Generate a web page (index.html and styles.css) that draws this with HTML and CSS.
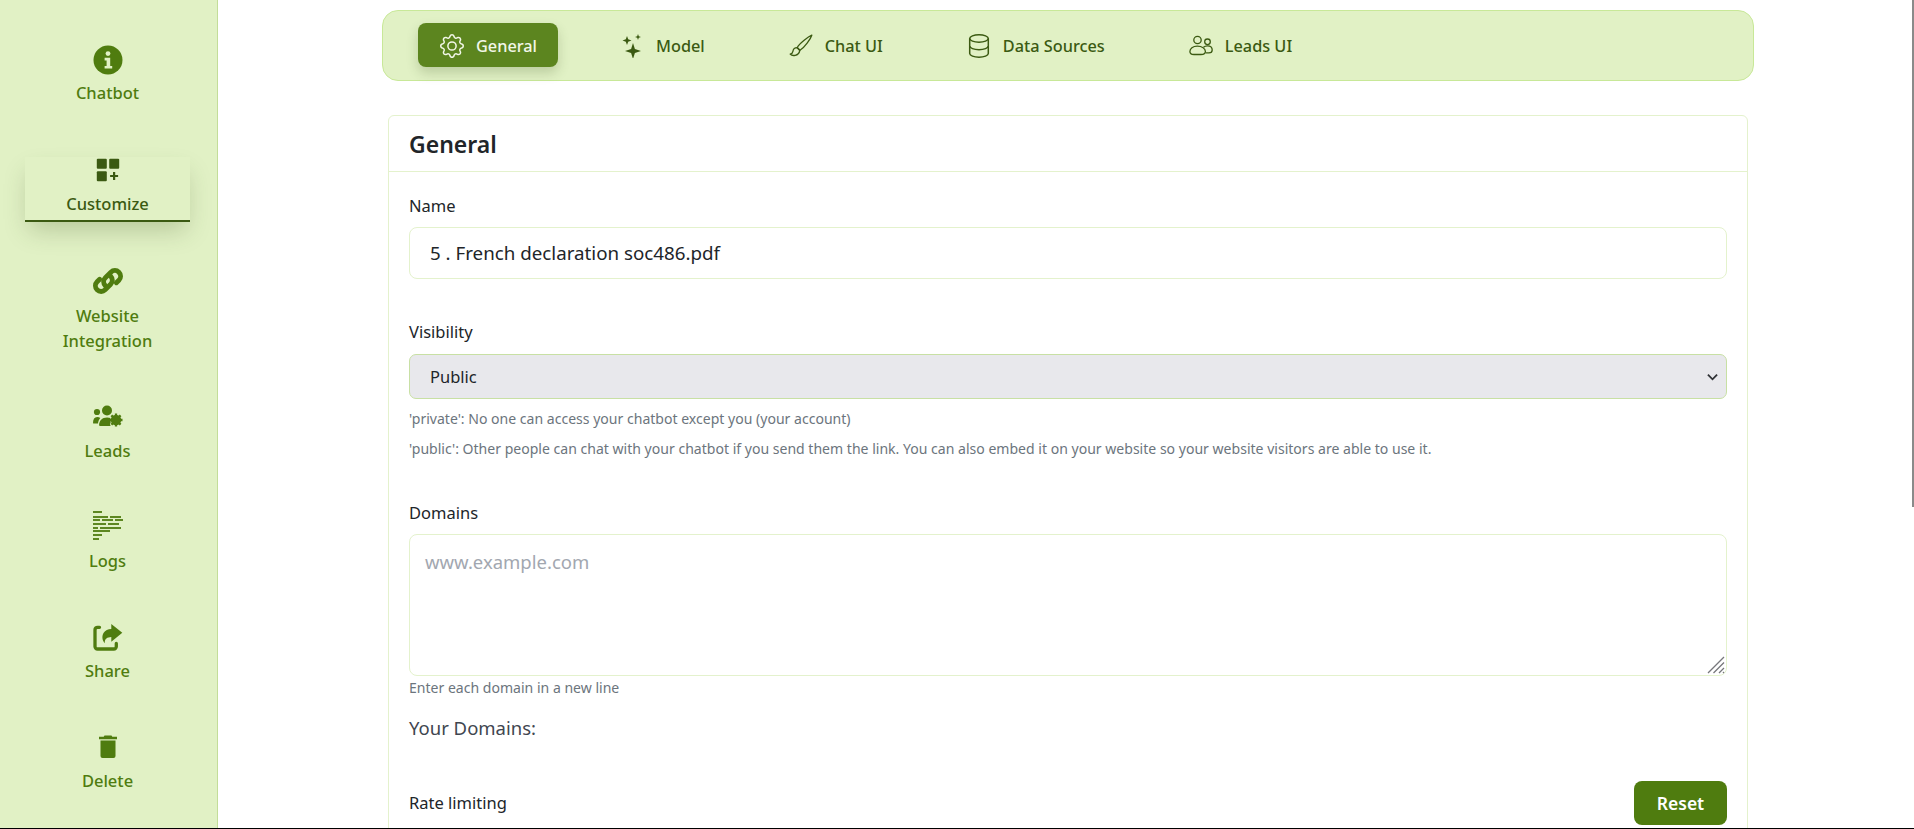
FILE: index.html
```html
<!DOCTYPE html>
<html lang="en">
<head>
  <meta charset="UTF-8" />
  <meta name="viewport" content="width=device-width, initial-scale=1.0" />
  <title>Customize chatbot</title>
  <link rel="stylesheet" href="styles.css">
</head>
<body>
  <div class="app">
    <nav class="sidebar">
      <a class="side-item">
        <svg class="side-icon" viewBox="0 0 30 30"><circle cx="15" cy="15" r="14.500" fill="currentColor"/><circle cx="15" cy="8.600" r="2.400" fill="#e1f1c5"/><path d="M11.600 12.800h5.600v8.200h2v2.600h-7.600V21h2v-5.600h-2z" fill="#e1f1c5"/></svg>
        <span>Chatbot</span>
      </a>
      <a class="side-item active">
        <svg class="side-icon" viewBox="0 0 24 24"><rect x="0.800" y="0.800" width="10" height="10" rx="1" fill="currentColor"/><rect x="13.200" y="0.800" width="10" height="10" rx="1" fill="currentColor"/><rect x="0.800" y="13.200" width="10" height="10" rx="1" fill="currentColor"/><path d="M17 14h2.200v2.900h2.900v2.200h-2.900V22H17v-2.900h-2.900v-2.200H17z" fill="currentColor"/></svg>
        <span>Customize</span>
      </a>
      <a class="side-item tall">
        <svg class="side-icon" viewBox="1.500 1.500 27 27"><g fill="none" stroke="currentColor" stroke-width="4.400" stroke-linecap="round"><path d="M12.600 19.200c-2-2-2-5.100 0-7.100l5-5c2-2 5.200-2 7.200 0 2 2 2 5.200 0 7.200l-2.300 2.300"/><path d="M17.400 10.800c2 2 2 5.100 0 7.100l-5 5c-2 2-5.200 2-7.200 0-2-2-2-5.200 0-7.200l2.300-2.300"/></g></svg>
        <span>Website<br>Integration</span>
      </a>
      <a class="side-item">
        <svg class="side-icon" viewBox="0 0 30 30"><g fill="currentColor"><circle cx="14" cy="7.500" r="5"/><circle cx="4" cy="9" r="3.100"/><path d="M0 20c0-4 1.500-6 4.200-6 1.300 0 2.300.4 3.100 1.100C6 16.600 5.200 18.400 5 20.500H1C.4 20.500 0 20.400 0 20z"/><path d="M7 23c-.5 0-.9-.4-.9-.9 0-4.400 2.800-7.700 8-7.700 1.300 0 2.400.2 3.400.6-.9 1.600-.5 3.200.5 4.100-1 1-1.200 2.600-.3 3.900z"/></g><circle cx="23" cy="17" r="3.700" fill="none" stroke="currentColor" stroke-width="3"/><path d="M23 10.500v13M16.500 17h13M18.400 12.400l9.200 9.200M27.600 12.400l-9.200 9.200" stroke="currentColor" stroke-width="2.300"/></svg>
        <span>Leads</span>
      </a>
      <a class="side-item">
        <svg class="side-icon" viewBox="0 0 30 30"><g fill="currentColor"><rect x="0" y="-1.900" width="9" height="1.800"/><rect x="0" y="3.100" width="15" height="1.800"/><rect x="17" y="3.100" width="11" height="1.800"/><rect x="0" y="6.100" width="7" height="1.800"/><rect x="9" y="6.100" width="11" height="1.800"/><rect x="22" y="6.100" width="8" height="1.800"/><rect x="0" y="10.100" width="13" height="1.800"/><rect x="15" y="10.100" width="11" height="1.800"/><rect x="0" y="14.100" width="5" height="1.800"/><rect x="7" y="14.100" width="21" height="1.800"/><rect x="0" y="17.100" width="17" height="1.800"/><rect x="0" y="21.100" width="9" height="1.800"/><rect x="0" y="25.100" width="6" height="1.800"/></g></svg>
        <span>Logs</span>
      </a>
      <a class="side-item">
        <svg class="side-icon" viewBox="0 0 30 30"><path d="M6.500 4.300H4.500A2.500 2.500 0 0 0 2 6.800v16.700A2.500 2.500 0 0 0 4.500 26h16.300a2.500 2.500 0 0 0 2.500-2.500v-3" fill="none" stroke="currentColor" stroke-width="3.300" stroke-linecap="round"/><path d="M18.300 1 29.300 9.700 18.300 18.700V14c-4 .2-6.800 1.600-6.500 6.300C9 17 8.800 13 10.500 10 12.300 7.300 15 6.200 18.300 6z" fill="currentColor"/></svg>
        <span>Share</span>
      </a>
      <a class="side-item">
        <svg class="side-icon" viewBox="0 0 30 30"><path d="M11.500 2.500h7l.8 1.200H24v2.600H6V3.700h4.700z" fill="currentColor"/><path d="M7.500 7.500h15v15.500a2 2 0 0 1-2 2h-11a2 2 0 0 1-2-2z" fill="currentColor"/></svg>
        <span>Delete</span>
      </a>
    </nav>

    <main class="content">
      <div class="tabs">
        <a class="tab active">
          <svg class="tab-icon" viewBox="0 0 16 16" fill="currentColor"><path d="M8 4.754a3.246 3.246 0 1 0 0 6.492 3.246 3.246 0 0 0 0-6.492zM5.754 8a2.246 2.246 0 1 1 4.492 0 2.246 2.246 0 0 1-4.492 0z"/><path d="M9.796 1.343c-.527-1.790-3.065-1.790-3.592 0l-.094.319a.873.873 0 0 1-1.255.520l-.292-.160c-1.640-.892-3.433.902-2.540 2.541l.159.292a.873.873 0 0 1-.520 1.255l-.319.094c-1.790.527-1.790 3.065 0 3.592l.319.094a.873.873 0 0 1 .520 1.255l-.160.292c-.892 1.640.901 3.434 2.541 2.540l.292-.159a.873.873 0 0 1 1.255.520l.094.319c.527 1.790 3.065 1.790 3.592 0l.094-.319a.873.873 0 0 1 1.255-.520l.292.160c1.640.893 3.434-.902 2.540-2.541l-.159-.292a.873.873 0 0 1 .520-1.255l.319-.094c1.790-.527 1.790-3.065 0-3.592l-.319-.094a.873.873 0 0 1-.520-1.255l.160-.292c.893-1.640-.902-3.433-2.541-2.540l-.292.159a.873.873 0 0 1-1.255-.520l-.094-.319zm-2.633.283c.246-.835 1.428-.835 1.674 0l.094.319a1.873 1.873 0 0 0 2.693 1.115l.291-.160c.764-.415 1.600.420 1.184 1.185l-.159.292a1.873 1.873 0 0 0 1.116 2.692l.318.094c.835.246.835 1.428 0 1.674l-.319.094a1.873 1.873 0 0 0-1.115 2.693l.160.291c.415.764-.420 1.600-1.185 1.184l-.291-.159a1.873 1.873 0 0 0-2.693 1.116l-.094.318c-.246.835-1.428.835-1.674 0l-.094-.319a1.873 1.873 0 0 0-2.692-1.115l-.292.160c-.764.415-1.600-.420-1.184-1.185l.159-.291A1.873 1.873 0 0 0 1.945 8.930l-.319-.094c-.835-.246-.835-1.428 0-1.674l.319-.094A1.873 1.873 0 0 0 3.060 4.377l-.160-.292c-.415-.764.420-1.600 1.185-1.184l.292.159a1.873 1.873 0 0 0 2.692-1.115l.094-.319z"/></svg>
          General
        </a>
        <a class="tab">
          <svg class="tab-icon" viewBox="0 0 24 24" fill="currentColor"><path d="M13 9l1.900 6.100L21 17l-6.100 1.900L13 25l-1.900-6.100L5 17l6.100-1.900z"/><path d="M7 2l1.200 3.300L11.500 6.500 8.200 7.700 7 11 5.800 7.700 2.500 6.500 5.800 5.300z"/><path d="M18 0l.8 2.200L21 3l-2.200.8L18 6l-.8-2.200L15 3l2.200-.8z"/></svg>
          Model
        </a>
        <a class="tab">
          <svg class="tab-icon" viewBox="0 0 24 24" fill="none" stroke="currentColor" stroke-width="1.300" stroke-linejoin="round"><path d="M22.800 1.200c-3.500 1.400-12 7.900-14.600 12.300l2.800 2.800C15.500 13.500 21.600 5 22.800 1.200z"/><path d="M8.200 13.700c-2.600 0-4 1.600-4.300 3.700-.2 1.400-1 2.300-2.700 2.700 1.800 2 8.400 2.400 9.600-3.600z"/></svg>
          Chat UI
        </a>
        <a class="tab">
          <svg class="tab-icon" viewBox="-1 0 24 24" fill="none" stroke="currentColor" stroke-width="1.500"><ellipse cx="11" cy="4.500" rx="9.300" ry="3.700"/><path d="M1.700 4.500v15c0 2 4.200 3.700 9.300 3.700s9.300-1.700 9.300-3.700v-15"/><path d="M1.700 12c0 2 4.200 3.700 9.300 3.700s9.300-1.700 9.300-3.700"/></svg>
          Data Sources
        </a>
        <a class="tab">
          <svg class="tab-icon" viewBox="0 0 24 24" fill="none" stroke="currentColor" stroke-width="1.300"><circle cx="8.500" cy="6" r="3.700"/><circle cx="18.500" cy="7.800" r="2.800"/><path d="M8.300 12.200c-4.500 0-7.400 2.500-7.400 5.300 0 2 1.700 3 4 3h7c2.800 0 4.500-1 4.500-3 0-2.900-3.300-5.300-8.100-5.300z"/><path d="M14.500 13.300c1-1 2.500-1.500 4-1.500 2.900 0 4.700 1.900 4.700 4.100 0 1.800-1.200 2.900-3.200 2.900h-3.400"/></svg>
          Leads UI
        </a>
      </div>

      <section class="card">
        <h2 class="card-title">General</h2>
        <div class="card-body">
          <label class="field-label name-label">Name</label>
          <input class="text-input" type="text" value="5 . French declaration soc486.pdf">

          <label class="field-label visibility-label">Visibility</label>
          <select class="select-input">
            <option>Public</option>
            <option>Private</option>
          </select>
          <p class="help first">'private': No one can access your chatbot except you (your account)</p>
          <p class="help second">'public': Other people can chat with your chatbot if you send them the link. You can also embed it on your website so your website visitors are able to use it.</p>

          <label class="field-label domains-label">Domains</label>
          <div class="area-wrap">
            <textarea class="area-input" placeholder="www.example.com"></textarea>
            <svg class="grip" viewBox="0 0 18 18" stroke="#77787c" stroke-width="1.300"><path d="M1 17 17 1M6.500 17 17 6.500M12 17l5-5M16 17l1-1"/></svg>
          </div>
          <p class="help hint">Enter each domain in a new line</p>
          <h3 class="domains-title">Your Domains:</h3>

          <div class="rate-row">
            <span class="field-label">Rate limiting</span>
            <button class="reset-btn">Reset</button>
          </div>
        </div>
      </section>
    </main>

    <div class="scroll-thumb"></div>
  </div>
</body>
</html>
```

FILE: styles.css
```css
* {
  margin: 0;
  padding: 0;
  box-sizing: border-box;
}

body {
  font-family: 'Noto Sans', 'Open Sans', sans-serif;
  background: #fff;
  color: #212529;
  overflow: hidden;
}

.app {
  position: relative;
  display: flex;
  height: 829px;
  overflow: hidden;
  border-bottom: 1px solid #000;
}

/* left rail */
.sidebar {
  flex: 0 0 218px;
  background: #e1f1c5;
  border-right: 1px solid #c3dd99;
  display: flex;
  flex-direction: column;
  align-items: center;
  padding: 45px 2px 0 0;
}

.side-item {
  flex: none;
  width: 165px;
  display: flex;
  flex-direction: column;
  align-items: center;
  color: #4f7c0f;
  font-size: 16.500px;
  font-weight: 500;
  line-height: 26px;
  text-align: center;
  height: 110px;
}

.side-item span {
  margin-top: 5px;
}

.side-item.tall {
  height: 137px;
  line-height: 25px;
}

.side-item.tall span {
  margin-top: 7px;
}

.side-item.active {
  color: #3b5a12;
  height: 65px;
  margin: 2px 0 44px;
  padding-top: 1px;
  border-bottom: 2px solid #3b5a12;
  box-shadow: 0 12px 24px -4px rgba(60, 80, 30, 0.25);
}

.side-item.active span {
  margin-top: 9px;
}

.side-icon {
  width: 30px;
  height: 30px;
  flex: none;
  overflow: visible;
}

.side-item.active .side-icon {
  width: 24px;
  height: 24px;
}

/* main column */
.content {
  flex: 1;
  padding: 10px 0 0 164px;
}

.tabs {
  width: 1372px;
  height: 71px;
  background: #e1f1c5;
  border: 1px solid #c8e898;
  border-radius: 16px;
  display: flex;
  align-items: flex-start;
  gap: 40px;
  padding: 12px 0 0 35px;
}

.tab {
  display: flex;
  align-items: center;
  gap: 12px;
  height: 44px;
  padding: 2px 22px 0;
  color: #3b5a12;
  font-size: 16.300px;
  font-weight: 500;
  border-radius: 8px;
}

.tab.active {
  padding-right: 21px;
  background: #5c851f;
  color: #f2f7e8;
  box-shadow: 0 6px 12px rgba(60, 80, 30, 0.22);
}

.tab-icon {
  width: 24px;
  height: 24px;
  flex: none;
}

/* form card */
.card {
  width: 1360px;
  margin: 34px 0 0 6px;
  border: 1px solid #e4f2cd;
  border-radius: 6px 6px 0 0;
  height: 760px;
}

.card-title {
  height: 56px;
  padding: 0 20px;
  font-size: 23px;
  font-weight: 600;
  line-height: 57px;
  color: #212529;
  border-bottom: 1px solid #e4f2cd;
}

.card-body {
  padding: 0 20px;
  display: flex;
  flex-direction: column;
}

.field-label {
  font-size: 16.500px;
  line-height: 24px;
  color: #212529;
}

.name-label {
  margin-top: 22px;
}

.text-input {
  height: 52px;
  margin-top: 9px;
  padding: 0 20px 2px;
  border: 1px solid #e4f2cd;
  border-radius: 8px;
  font: inherit;
  font-size: 18.750px;
  color: #212529;
  outline: none;
}

.visibility-label {
  margin-top: 41px;
}

.select-input {
  height: 45px;
  margin-top: 10px;
  padding: 0 20px;
  appearance: none;
  background: #e8e8ec url("data:image/svg+xml,%3Csvg xmlns='http://www.w3.org/2000/svg' viewBox='0 0 12 8'%3E%3Cpath d='M1 1.500 6 6.500l5-5' fill='none' stroke='%23303236' stroke-width='2'/%3E%3C/svg%3E") no-repeat right 8px center / 11px 8px;
  border: 1px solid #c8e0a4;
  border-radius: 7px;
  font: inherit;
  font-size: 16.500px;
  color: #212529;
  outline: none;
}

.help {
  font-size: 14.050px;
  line-height: 20px;
  color: #6c757d;
}

.help.first {
  margin-top: 10px;
}

.help.second {
  margin-top: 10px;
}

.domains-label {
  margin-top: 42px;
}

.area-wrap {
  position: relative;
  display: flex;
  margin-top: 9px;
}

.area-input {
  flex: 1;
  height: 142px;
  padding: 13px 15px;
  resize: none;
  border: 1px solid #e4f2cd;
  border-radius: 8px;
  font: inherit;
  font-size: 18.500px;
  line-height: 27px;
  color: #212529;
  outline: none;
}

.area-input::placeholder {
  color: #a2a7b0;
}

.grip {
  position: absolute;
  right: 2px;
  bottom: 2px;
  width: 18px;
  height: 18px;
}

.help.hint {
  margin-top: 2px;
}

.domains-title {
  margin-top: 16px;
  font-size: 18.500px;
  font-weight: 400;
  line-height: 28px;
  color: #3f4650;
}

.rate-row {
  margin-top: 39px;
  display: flex;
  align-items: center;
  justify-content: space-between;
  height: 44px;
}

.reset-btn {
  width: 93px;
  height: 44px;
  background: #4f7c0f;
  color: #fff;
  border: none;
  border-radius: 8px;
  font: inherit;
  font-size: 17.500px;
  font-weight: 600;
}

.scroll-thumb {
  position: absolute;
  top: 0;
  right: 0;
  width: 2px;
  height: 507px;
  background: #8a8a8a;
}
```
